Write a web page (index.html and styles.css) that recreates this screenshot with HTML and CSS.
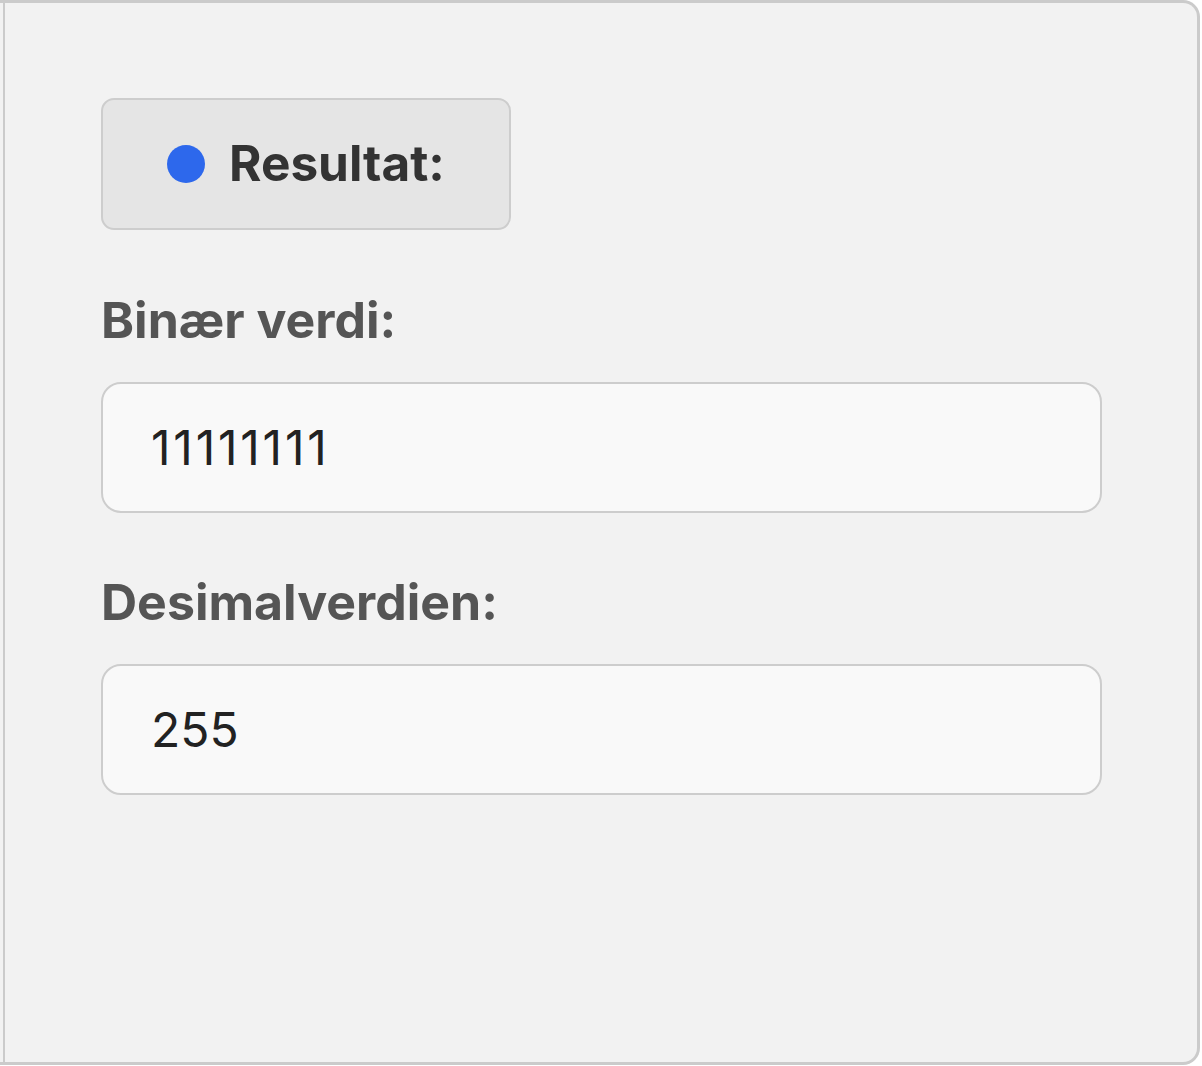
FILE: index.html
```html
<!DOCTYPE html>
<html lang="no">
<head>
<meta charset="utf-8">
<title>Resultat</title>
<link rel="stylesheet" href="styles.css">
</head>
<body>
<div class="frame">
  <div class="side"></div>
  <div class="main">
    <div class="badge"><span class="dot"></span><span class="badge-text">Resultat:</span></div>
    <div class="label first">Binær verdi:</div>
    <div class="field binary">11111111</div>
    <div class="label">Desimalverdien:</div>
    <div class="field">255</div>
  </div>
</div>
</body>
</html>
```
FILE: styles.css
```css
html, body {
  margin: 0;
  padding: 0;
  background: #ffffff;
}
body {
  font-family: Inter, "Noto Sans", sans-serif;
}
.frame {
  display: flex;
  width: 1200px;
  height: 1065px;
  box-sizing: border-box;
  background: #f2f2f2;
  border-top: 3px solid #cbcbcb;
  border-right: 3px solid #cbcbcb;
  border-bottom: 3px solid #cbcbcb;
  border-radius: 0 17px 17px 0;
}
.side {
  width: 3px;
  flex: none;
}
.main {
  flex: 1;
  border-left: 2.5px solid #cbcbcb;
  padding: 95px 95px 0 96px;
  display: flex;
  flex-direction: column;
  align-items: stretch;
}
.badge {
  align-self: flex-start;
  display: flex;
  align-items: center;
  gap: 24px;
  height: 132px;
  box-sizing: border-box;
  padding: 0 64px;
  background: #e5e5e5;
  border: 2.5px solid #cdcdcd;
  border-radius: 13px;
}
.dot {
  width: 38px;
  height: 38px;
  border-radius: 50%;
  background: #2d68ec;
  flex: none;
}
.badge-text {
  font-size: 49.5px;
  font-weight: 700;
  color: #333333;
  line-height: 1.2;
}
.label {
  font-size: 50px;
  font-weight: 700;
  color: #555555;
  line-height: 58px;
  margin-top: 60px;
  margin-bottom: 33px;
}
.label.first {
  margin-top: 61px;
}
.field {
  height: 131px;
  box-sizing: border-box;
  display: flex;
  align-items: center;
  padding: 0 48px;
  background: #f9f9f9;
  border: 2.5px solid #cdcdcd;
  border-radius: 20px;
  font-size: 48px;
  font-weight: 400;
  color: #222222;
}
.field.binary {
  letter-spacing: 2.8px;
}
```
